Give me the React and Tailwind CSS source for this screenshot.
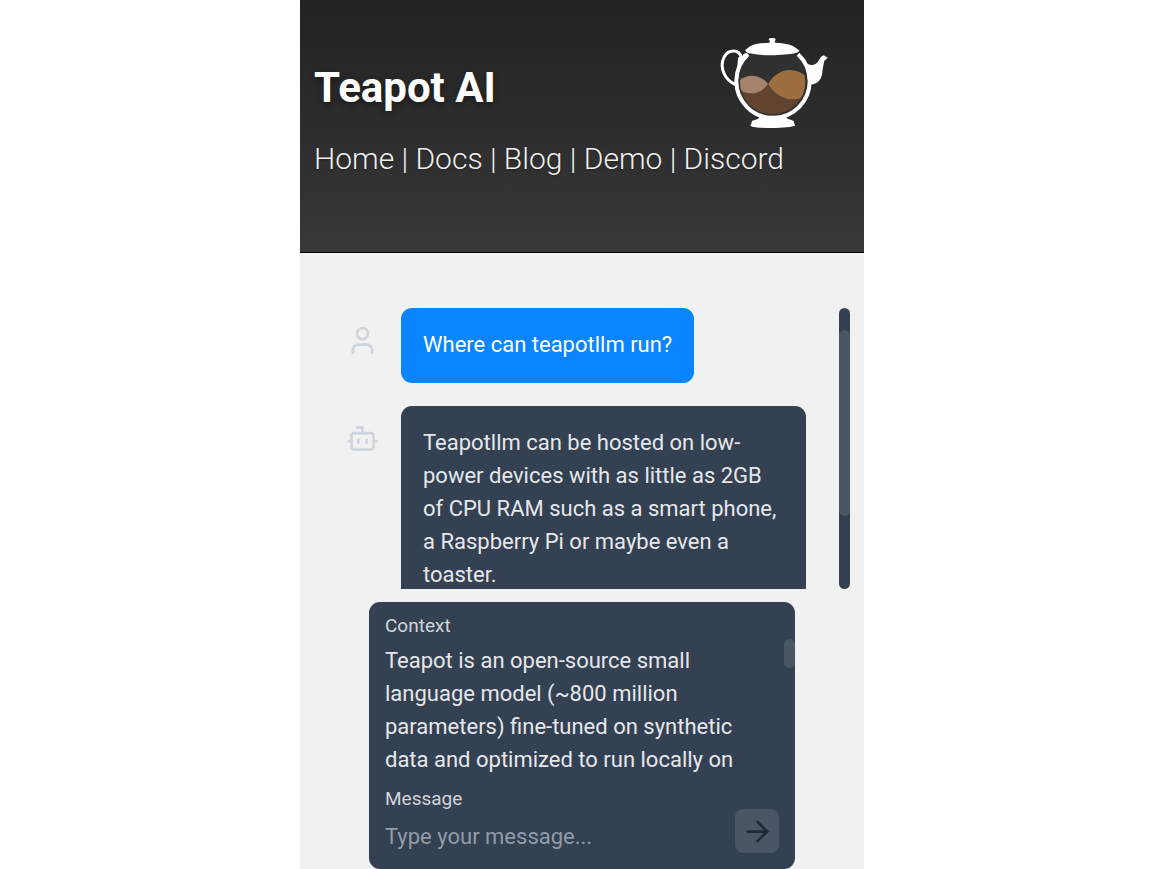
import { useState } from "react";
import { ArrowRight, Bot, User } from "lucide-react";

const links = ["Home", "Docs", "Blog", "Demo", "Discord"];

const initialContext =
  "Teapot is an open-source small language model (~800 million parameters) fine-tuned on synthetic data and optimized to run locally on";

function TeapotLogo() {
  return (
    <svg viewBox="30 23 324 270" className="mr-[22px] h-[90px] w-[108px] shrink-0" role="img" aria-label="Teapot">
      <defs>
        <clipPath id="glass">
          <circle cx="188" cy="154" r="98" />
        </clipPath>
      </defs>
      <circle cx="188" cy="156" r="106" fill="#303030" />
      <path d="M93 80C87 56 56 56 43 79C27 109 42 148 77 163" fill="none" stroke="#fff" strokeWidth="9" />
      <path d="M84 82L95 78L104 69L116 71L98 92L82 110Z" fill="#fff" />
      <path d="M114 72A110 110 0 1 0 264 72" fill="none" stroke="#fff" strokeWidth="12" />
      <path d="M285 96C300 108 317 106 325 92L333 79L341 75L353 82L349 87L343 91L338 116C337 145 327 162 296 164Z" fill="#fff" />
      <g clipPath="url(#glass)">
        <path d="M85 140L174 161L290 140V255H85Z" fill="#61432f" />
        <path d="M85 155C107 128 150 130 174 161C151 193 114 197 85 176Z" fill="#a5836c" />
        <path d="M174 161C203 112 255 107 292 141V194C257 217 206 212 174 161Z" fill="#9d6e40" />
      </g>
      <path d="M106 59C113 54 120 45 139 41C154 38 168 38 178 37C182 33 177 30 176 27C176 22 197 22 197 27C197 31 192 33 196 37C216 38 235 40 247 46C258 51 260 56 268 60C267 66 260 67 258 68C222 76 154 77 117 69C110 67 106 64 106 59Z" fill="#fff" />
      <path d="M148 258H228C229 268 242 267 251 272C253 277 252 280 256 285C248 291 217 293 188 293C159 293 129 292 121 286C125 282 124 274 127 271C138 268 148 267 148 258Z" fill="#fff" />
    </svg>
  );
}

function Header() {
  return (
    <header className="border-b border-black bg-linear-to-b from-[#222222] to-[#383838] px-[14px] pt-[38px] pb-[70px] text-white">
      <div className="flex items-start justify-between">
        <h1 className="mt-4 text-[42px] leading-[68px] font-bold [text-shadow:0_3px_6px_rgba(0,0,0,0.4)]">Teapot AI</h1>
        <TeapotLogo />
      </div>
      <nav className="mt-2 text-[30px] leading-[46px] font-light whitespace-nowrap text-[#f0f0f0] [text-shadow:0_1px_2px_rgba(0,0,0,0.3)]">
        {links.map((name, i) => (
          <span key={name}>
            {i > 0 && " | "}
            <a href={"#" + name.toLowerCase()}>{name}</a>
          </span>
        ))}
      </nav>
    </header>
  );
}

function Message({ icon: Icon, tone, children }) {
  return (
    <div className="flex shrink-0 items-start gap-[22px]">
      <Icon size={33} className="mt-4 shrink-0 text-[#d0d5dd]" aria-hidden="true" />
      <p className={"rounded-[11px] px-[22px] pt-5 pb-[22px] " + tone}>{children}</p>
    </div>
  );
}

function Chat() {
  return (
    <section aria-label="Conversation" className="flex h-[281px] overflow-hidden">
      <div className="flex min-w-0 flex-1 flex-col gap-[23px] overflow-hidden pr-[33px] pl-8">
        <Message icon={User} tone="bg-[#0a84ff] text-white">
          Where can teapotllm run?
        </Message>
        <Message icon={Bot} tone="bg-[#334152] text-[#e5e7eb]">
          Teapotllm can be hosted on low-power devices with as little as 2GB of CPU RAM such as a smart phone, a
          Raspberry Pi or maybe even a toaster.
        </Message>
      </div>
      <div className="w-[11px] rounded-full bg-[#334152] pt-[22px]">
        <div className="h-[186px] rounded-full bg-[#4a5565]" />
      </div>
    </section>
  );
}

function Composer() {
  const [context, setContext] = useState(initialContext);
  const [message, setMessage] = useState("");

  return (
    <form
      onSubmit={(e) => e.preventDefault()}
      className="mx-[55px] mt-[13px] rounded-[11px] bg-[#334152] pt-[10px] pb-4 pl-4"
    >
      <label htmlFor="context" className="block text-[19px] leading-[27px] text-[#d1d5db]">
        Context
      </label>
      <div className="flex items-start">
        <textarea
          id="context"
          rows={4}
          value={context}
          onChange={(e) => setContext(e.target.value)}
          className="mt-[5px] mr-4 block min-w-0 flex-1 resize-none overflow-hidden text-[#e5e7eb] outline-none"
        />
        <div className="h-[29px] w-[11px] rounded-full bg-[#4a5565]" />
      </div>
      <div className="mt-[9px] flex items-end gap-4 pr-4">
        <div className="min-w-0 flex-1">
          <label htmlFor="message" className="block text-[19px] leading-[27px] text-[#d1d5db]">
            Message
          </label>
          <input
            id="message"
            type="text"
            value={message}
            onChange={(e) => setMessage(e.target.value)}
            placeholder="Type your message..."
            className="mt-2 block h-[33px] w-full outline-none placeholder:text-[#929ba8]"
          />
        </div>
        <button
          type="submit"
          aria-label="Send"
          className="flex size-11 items-center justify-center rounded-lg bg-[#4a5565] text-[#1f2937]"
        >
          <ArrowRight size={33} />
        </button>
      </div>
    </form>
  );
}

export default function App() {
  return (
    <div className="min-h-screen bg-white font-['Roboto',sans-serif] text-[22px] leading-[33px]">
      <div className="mx-auto min-h-screen w-full max-w-[564px] bg-[#f1f1f1]">
        <Header />
        <main className="px-[14px] pt-[55px]">
          <Chat />
          <Composer />
        </main>
      </div>
    </div>
  );
}
